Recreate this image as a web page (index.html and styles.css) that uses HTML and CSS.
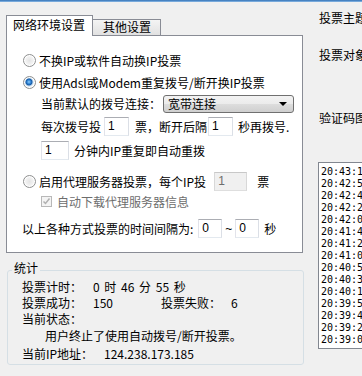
FILE: index.html
```html
<!doctype html>
<html lang="zh-CN">
  <head>
    <meta charset="UTF-8" />
    <meta name="viewport" content="width=device-width, initial-scale=1.0" />
    <title>投票设置</title>
    <link rel="stylesheet" href="styles.css">
  </head>
  <body>
    <div class="topbar"></div>

    <div class="main">
      <div class="left">
        <div class="tabs">
          <div class="tab on">网络环境设置</div>
          <div class="tab">其他设置</div>
        </div>

        <div class="panel">
          <div class="row r1">
            <span class="radio"></span>
            <span>不换IP或软件自动换IP投票</span>
          </div>
          <div class="row r2">
            <span class="radio on"></span>
            <span>使用Adsl或Modem重复拨号/断开换IP投票</span>
          </div>
          <div class="row r3 sub">
            <span>当前默认的拨号连接：</span>
            <div class="combo">
              <span>宽带连接</span>
              <span class="arrow"></span>
            </div>
          </div>
          <div class="row r4 sub">
            <span>每次拨号投</span>
            <span class="edit w25">1</span>
            <span class="gap6">票，断开后隔</span>
            <span class="edit w25 nl">1</span>
            <span class="gap5">秒再拨号.</span>
          </div>
          <div class="row r5 sub">
            <span class="edit w28">1</span>
            <span class="gap5">分钟内IP重复即自动重拨</span>
          </div>
          <div class="row r6">
            <span class="radio"></span>
            <span>启用代理服务器投票，每个IP投</span>
            <span class="edit w33 off">1</span>
            <span class="gap10">票</span>
          </div>
          <div class="row r7 sub">
            <span class="check">
              <svg width="11" height="11" viewBox="0 0 11 11"><path d="M2.5 5.5 L4.5 7.5 L8.5 2.5" fill="none" stroke="#b0b0b0" stroke-width="1.5"/></svg>
            </span>
            <span class="grey">自动下载代理服务器信息</span>
          </div>
          <div class="row r8">
            <span>以上各种方式投票的时间间隔为:</span>
            <span class="edit w24 gap5">0</span>
            <span class="tilde">~</span>
            <span class="edit w24">0</span>
            <span class="gap5">秒</span>
          </div>
        </div>

        <fieldset class="stats">
          <legend>统计</legend>
          <div class="srow s1"><span class="lbl">投票计时：</span><span class="val">0 时 46 分 55 秒</span></div>
          <div class="srow s2"><span class="lbl">投票成功：</span><span class="val num">150</span><span class="lbl2">投票失败：</span><span class="val">6</span></div>
          <div class="srow s3"><span>当前状态：</span></div>
          <div class="srow s4 msg">用户终止了使用自动拨号/断开投票。</div>
          <div class="srow s5"><span class="lbl ip">当前IP地址：</span><span class="val">124.238.173.185</span></div>
        </fieldset>
      </div>

      <div class="right">
        <div class="label">投票主题</div>
        <div class="label l2">投票对象</div>
        <div class="label l3">验证码图</div>
        <div class="log">
          <div>20:43:12 投票成功</div>
          <div>20:42:56 投票成功</div>
          <div>20:42:41 投票成功</div>
          <div>20:42:25 投票成功</div>
          <div>20:42:09 投票成功</div>
          <div>20:41:47 投票成功</div>
          <div>20:41:28 投票成功</div>
          <div>20:41:06 投票成功</div>
          <div>20:40:51 投票成功</div>
          <div>20:40:33 投票成功</div>
          <div>20:40:17 投票成功</div>
          <div>20:39:58 投票成功</div>
          <div>20:39:42 投票成功</div>
          <div>20:39:24 投票成功</div>
          <div>20:39:05 投票成功</div>
        </div>
      </div>
    </div>
  </body>
</html>
```

FILE: styles.css
```css
body {
  margin: 0;
  background-color: #f0f0f0;
  font-family: "Noto Sans CJK SC", sans-serif;
  font-size: 12px;
  color: #000000;
  overflow: hidden;
}

.topbar {
  height: 2px;
  background: linear-gradient(#2f6fb5, #8fbce8);
}

.main {
  display: flex;
  align-items: flex-start;
}

.left {
  width: 298px;
  margin-left: 6px;
  flex: none;
}

/* tabs */
.tabs {
  display: flex;
  align-items: flex-end;
  height: 21px;
  margin-top: 13px;
  margin-bottom: -1px;
}
.tab {
  box-sizing: border-box;
  height: 16px;
  width: 68px;
  margin-bottom: 1px;
  padding-left: 10px;
  border: 1px solid #898c95;
  border-left: none;
  border-bottom: none;
  background: linear-gradient(#f4f4f4, #e1e1e1);
  line-height: 14px;
}
.tab.on {
  height: 21px;
  width: 87px;
  margin-bottom: 0;
  padding-left: 6px;
  border-left: 1px solid #898c95;
  background: #ffffff;
  line-height: 18px;
  z-index: 1;
}

.panel {
  box-sizing: border-box;
  width: 297px;
  height: 218px;
  padding-top: 15px;
  border: 1px solid #898c95;
  background-color: #ffffff;
}

.row {
  display: flex;
  align-items: center;
  height: 19px;
  padding-left: 16px;
  white-space: nowrap;
}
.row.sub { padding-left: 34px; }
.r2 { margin-top: 3px; }
.r3 { margin-top: 2px; }
.r4 { margin-top: 4px; }
.r5 { margin-top: 5px; }
.r6 { margin-top: 12px; }
.r7 { margin-top: 1px; }
.r8 { margin-top: 8px; padding-left: 15px; }

.radio {
  box-sizing: border-box;
  width: 13px;
  height: 13px;
  margin-right: 3px;
  border: 1px solid #8e8f8f;
  border-radius: 50%;
  background: radial-gradient(circle at 50% 50%, #e4e4e4 0, #f6f6f6 5px);
  box-shadow: inset 0 0 0 1px #ffffff;
}
.radio.on {
  background: radial-gradient(circle at 45% 45%, #8fd0ff 0, #2b7fd0 2px, #1c5ca6 3px, #b9d7ef 4px, #f4f4f4 5px);
}

.check {
  box-sizing: border-box;
  width: 11px;
  height: 11px;
  margin-right: 5px;
  border: 1px solid #b8b8b8;
  background: #f4f4f4;
  display: flex;
}
.check svg { margin: -1px; }
.grey { color: #6d6d6d; }

.combo {
  box-sizing: border-box;
  display: flex;
  align-items: center;
  justify-content: space-between;
  width: 131px;
  height: 18px;
  margin-left: 2px;
  padding: 0 6px 0 4px;
  border: 1px solid #707070;
  border-radius: 3px;
  background: linear-gradient(#f3f3f3 0%, #ebebeb 50%, #dddddd 51%, #cfcfcf 100%);
}
.arrow {
  width: 0;
  height: 0;
  border-left: 4px solid transparent;
  border-right: 4px solid transparent;
  border-top: 4px solid #000000;
}

.edit {
  box-sizing: border-box;
  height: 19px;
  padding-left: 3px;
  border: 1px solid;
  border-color: #abadb3 #dbdfe6 #e3e9ef #e2e3ea;
  background-color: #ffffff;
  font-family: "Liberation Sans", sans-serif;
  font-size: 12px;
  line-height: 17px;
}
.edit.off {
  background-color: #f0f0f0;
  color: #6d6d6d;
  border-color: #c8c8c8 #d8d8d8 #dedede #d8d8d8;
}
.w24 { width: 24px; }
.w25 { width: 25px; margin-left: 3px; }
.w28 { width: 28px; }
.w33 { width: 33px; margin-left: 8px; }
.nl { margin-left: 1px; }
.gap5 { margin-left: 5px; }
.gap6 { margin-left: 6px; }
.gap10 { margin-left: 10px; }
.tilde {
  width: 13px;
  text-align: center;
  font-family: "Liberation Sans", sans-serif;
}

/* statistics */
.stats {
  box-sizing: border-box;
  width: 297px;
  height: 103px;
  margin: 9px 0 0 1px;
  padding: 0 0 0 14px;
  border: 1px solid #d5dfe5;
  border-radius: 3px;
}
.stats legend {
  margin-left: -10px;
  padding: 0 2px 4px;
  line-height: 12px;
}
.srow {
  display: flex;
  white-space: nowrap;
}
.s1 { height: 17px; line-height: 17px; }
.s2 { height: 15px; line-height: 15px; }
.s3 { height: 17px; line-height: 17px; }
.s4 { height: 18px; line-height: 18px; padding-left: 23px; }
.s5 { height: 18px; line-height: 18px; }
.lbl { width: 71px; }
.lbl.ip { width: 82px; }
.lbl2 { margin-left: 50px; width: 70px; }
.val { word-spacing: 2px; }
.num { width: 18px; }

/* right column */
.right {
  flex: none;
  width: 80px;
  margin-left: 14px;
  padding-top: 9px;
}
.label {
  height: 14px;
  line-height: 14px;
  white-space: nowrap;
  padding-left: 1px;
}
.l2 { margin-top: 23px; }
.l3 { margin-top: 49px; }
.log {
  box-sizing: border-box;
  height: 187px;
  margin-top: 37px;
  padding: 3px 0 0 2px;
  border: 1px solid #828790;
  border-right: none;
  background-color: #ffffff;
  font-family: "DejaVu Sans Mono", monospace;
  font-size: 10px;
  line-height: 12px;
  white-space: nowrap;
  overflow: hidden;
}
```
